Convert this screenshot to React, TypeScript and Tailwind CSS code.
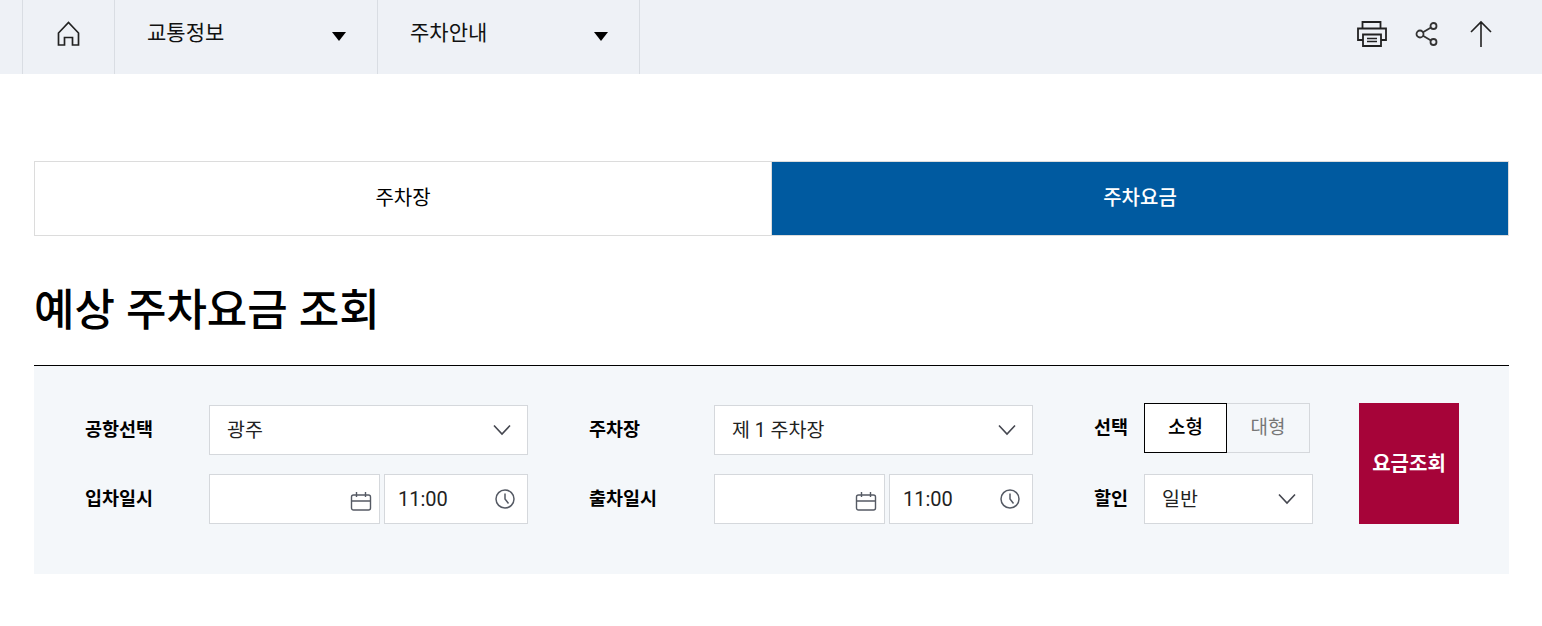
const font = "font-['Roboto','Noto_Sans_CJK_KR',sans-serif]";

function Chevron() {
  return (
    <svg width="20" height="12" viewBox="0 0 20 12" fill="none" stroke="#44464f" strokeWidth="1.6">
      <path d="M2 1.500L10 10l8-8.500" />
    </svg>
  );
}

function NavSelect({ label, width }: { label: string; width: string }) {
  return (
    <div className={`flex items-center justify-between border-l border-[#d9dde3] pl-[32px] pr-[31px] pb-[2px] ${width}`}>
      <span className="mb-[5px] text-[21px] text-[#111]">{label}</span>
      <span className="h-0 w-0 border-x-[7px] border-t-[9px] border-x-transparent border-t-black" />
    </div>
  );
}

function Select({ value, width = "w-[319px]" }: { value: string; width?: string }) {
  return (
    <div className={`flex h-[50px] items-center justify-between border border-[#d5d8dc] bg-white pl-[17px] pr-[15px] ${width}`}>
      <span className="pt-[1px] text-[19.5px] text-[#222]">{value}</span>
      <Chevron />
    </div>
  );
}

function DateTime() {
  return (
    <div className="flex w-[319px] gap-[4px]">
      <div className="flex h-[50px] w-[171px] items-center justify-end border border-[#d5d8dc] bg-white pr-[7px]">
        <svg width="22" height="24" viewBox="0 0 22 24" fill="none" stroke="#555a64" strokeWidth="1.400">
          <rect x="1.500" y="8" width="19" height="15" rx="2" />
          <path d="M1.500 14h19M6.500 5v5M15.500 5v5" />
        </svg>
      </div>
      <div className="flex h-[50px] w-[144px] items-center justify-between border border-[#d5d8dc] bg-white pl-[13px] pr-[12px]">
        <span className="text-[20px] text-[#222]">11:00</span>
        <svg width="20" height="20" viewBox="0 0 20 20" fill="none" stroke="#555a64" strokeWidth="1.500">
          <circle cx="10" cy="10" r="9" />
          <path d="M10 4.500V10l3.500 4.500" />
        </svg>
      </div>
    </div>
  );
}

function Row({ label, children, labelWidth = "w-[124px]" }: { label: string; children: React.ReactNode; labelWidth?: string }) {
  return (
    <div className="flex items-center">
      <span className={`pt-[1px] text-[18.500px] font-bold text-black ${labelWidth}`}>{label}</span>
      {children}
    </div>
  );
}

export default function App() {
  return (
    <div className={`min-h-[626px] w-[1542px] bg-white ${font}`}>
      {/* top bar */}
      <div className="flex h-[74px] items-stretch justify-between bg-[#eef1f6] pl-[22px] pr-[49px]">
        <div className="flex border-r border-[#d9dde3]">
          <div className="flex w-[92px] items-center justify-center border-l border-[#d9dde3] pb-[6px]">
            <svg width="28" height="28" viewBox="0 0 28 28" fill="none" stroke="#222" strokeWidth="1.700">
              <path d="M3.500 25V13L13.500 2.500 23.500 13v12h-6v-7.500h-8V25z" />
            </svg>
          </div>
          <NavSelect label="교통정보" width="w-[263px]" />
          <NavSelect label="주차안내" width="w-[262px]" />
        </div>
        <div className="flex items-center gap-[27px] pb-[6px]">
          <svg width="32" height="28" viewBox="0 0 32 28" fill="none" stroke="#222" strokeWidth="1.800">
            <path d="M6.500 8V2h18v6" />
            <path d="M7 20H2V8.500h28V20h-5" />
            <path d="M7 14.500h18V26H7z" />
            <path d="M11 18.500h10M11 21.500h10" strokeWidth="1.500" />
          </svg>
          <svg width="24" height="26" viewBox="0 0 24 26" fill="none" stroke="#333" strokeWidth="1.800">
            <circle cx="18.500" cy="5" r="3" />
            <circle cx="5" cy="13" r="3.500" />
            <circle cx="18.500" cy="21" r="3" />
            <path d="M8 11.200l8-4.700M8 14.800l8 4.700" />
          </svg>
          <svg className="ml-[3px]" width="24" height="28" viewBox="0 0 24 28" fill="none" stroke="#222" strokeWidth="1.600">
            <path d="M12 27V2M2 12L12 2l10 10" />
          </svg>
        </div>
      </div>

      <div className="pl-[34px] pr-[33px] pt-[87px]">
        {/* tabs */}
        <div className="flex h-[75px] border border-[#dcdcdc]">
          <div className="flex w-[737px] items-center justify-center border-r border-[#dcdcdc] pb-[1px] text-[20px] text-black">주차장</div>
          <div className="flex flex-1 items-center justify-center bg-[#005aa0] pb-[1px] text-[20px] font-medium text-white">주차요금</div>
        </div>

        <h1 className="mt-[43px] text-[44px] font-medium leading-[64px] text-black">예상 주차요금 조회</h1>

        {/* search form */}
        <div className="mt-[22px] flex h-[209px] border-t border-black bg-[#f4f7fa] pl-[51px] pt-[37px]">
          <div className="flex flex-col gap-[19px] pt-[2px]">
            <Row label="공항선택"><Select value="광주" /></Row>
            <Row label="입차일시"><DateTime /></Row>
          </div>
          <div className="ml-[61px] flex flex-col gap-[19px] pt-[2px]">
            <Row label="주차장" labelWidth="w-[125px]"><Select value="제 1 주차장" /></Row>
            <Row label="출차일시" labelWidth="w-[125px]"><DateTime /></Row>
          </div>
          <div className="ml-[61px] flex flex-col gap-[21px]">
            <div className="flex items-center">
              <span className="w-[50px] pt-[1px] text-[18.500px] font-bold text-black">선택</span>
              <div className="flex h-[50px] w-[83px] items-center justify-center border border-black bg-white text-[19px] font-medium text-black">소형</div>
              <div className="flex h-[50px] w-[83px] items-center justify-center border border-l-0 border-[#d5d8dc] text-[19px] text-[#777]">대형</div>
            </div>
            <div className="flex items-center">
              <span className="w-[50px] pt-[1px] text-[18.500px] font-bold text-black">할인</span>
              <Select value="일반" width="w-[169px]" />
            </div>
          </div>
          <div className="ml-[46px] flex h-[121px] w-[100px] items-center justify-center bg-[#a60439] text-[20px] font-bold text-white">요금조회</div>
        </div>
      </div>
    </div>
  );
}
